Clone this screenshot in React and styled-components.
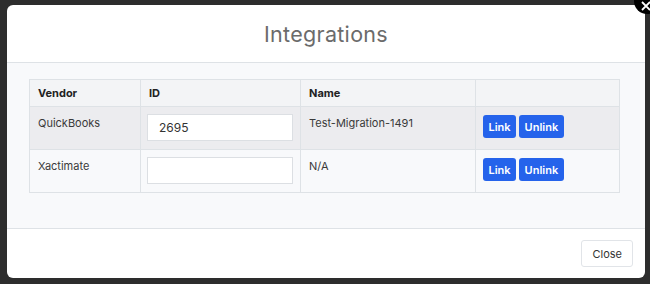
import React from 'react';
import styled, { createGlobalStyle } from 'styled-components';

const GlobalStyle = createGlobalStyle`
  html, body {
    margin: 0;
    padding: 0;
    background: #2d2d2d;
    font-family: Inter, "Noto Sans", sans-serif;
  }
`;

const Backdrop = styled.div`
  width: 650px;
  height: 284px;
  box-sizing: border-box;
  padding: 5px 5px 6px 7px;
  background: #2d2d2d;
  overflow: hidden;
`;

const Modal = styled.div`
  position: relative;
  width: 638px;
  height: 273px;
  background: #fff;
  border-radius: 6px;
  display: flex;
  flex-direction: column;
`;

const CloseX = styled.button`
  position: absolute;
  top: -17px;
  right: -15px;
  width: 26px;
  height: 26px;
  border-radius: 50%;
  border: none;
  background: #000;
  color: #fff;
  padding: 0;
  display: flex;
  align-items: center;
  justify-content: center;
  svg { margin: 10px 2px 0 0; }
`;

const Header = styled.div`
  height: 57px;
  display: flex;
  align-items: center;
  justify-content: center;
  border-bottom: 1px solid #dee2e6;
`;

const Title = styled.h2`
  margin: 0;
  font-size: 21.5px;
  font-weight: 400;
  color: #6b6b6b;
  letter-spacing: 0.3px;
`;

const Body = styled.div`
  flex: 1;
  background: #f8f9fb;
  padding: 16px 0 0 22px;
`;

const Table = styled.table`
  width: 591px;
  table-layout: fixed;
  border-collapse: collapse;
  font-size: 11px;
  color: #333;
`;

const Th = styled.th`
  box-sizing: border-box;
  text-align: left;
  font-weight: 700;
  color: #222;
  height: 27px;
  padding: 0 8px;
  background: #f3f4f6;
  border: 1px solid #dee2e6;
  width: ${(p) => p.w || 'auto'};
`;

const Tr = styled.tr`
  background: ${(p) => (p.shade ? '#ececef' : '#f8f9fb')};
`;

const Td = styled.td`
  vertical-align: top;
  height: 43px;
  box-sizing: border-box;
  padding: ${(p) => (p.pad ? '7px 6px' : '9px 8px')};
  border: 1px solid #dee2e6;
  color: #3a3a3a;
`;

const Input = styled.input`
  display: block;
  width: 146px;
  height: 27px;
  box-sizing: border-box;
  border: 1px solid #dcdfe3;
  background: #fff;
  padding: 0 11px;
  font: inherit;
  font-size: 12px;
  color: #333;
  outline: none;
`;

const Actions = styled.div`
  display: flex;
  gap: 3px;
  padding-top: 1px;
  padding-left: 1px;
`;

const Btn = styled.button`
  height: 23px;
  padding: 0 5.5px;
  border: none;
  border-radius: 3px;
  background: #2563eb;
  color: #fff;
  font: inherit;
  font-size: 11px;
  font-weight: 600;
`;

const Footer = styled.div`
  height: 49px;
  border-top: 1px solid #dee2e6;
  display: flex;
  align-items: center;
  justify-content: flex-end;
  padding: 0 12px;
`;

const CloseBtn = styled.button`
  height: 27px;
  padding: 0 10px;
  background: #fff;
  border: 1px solid #e1e4e8;
  border-radius: 3px;
  font: inherit;
  font-size: 11px;
  color: #333;
`;

const rows = [
  { vendor: 'QuickBooks', id: '2695', name: 'Test-Migration-1491' },
  { vendor: 'Xactimate', id: '', name: 'N/A' },
];

export default function App() {
  return (
    <Backdrop>
      <GlobalStyle />
      <Modal>
        <CloseX aria-label="close">
          <svg width="10" height="10" viewBox="0 0 10 10">
            <path d="M1 1L9 9M9 1L1 9" stroke="#fff" strokeWidth="1.8" />
          </svg>
        </CloseX>
        <Header>
          <Title>Integrations</Title>
        </Header>
        <Body>
          <Table>
            <thead>
              <tr>
                <Th w="111px">Vendor</Th>
                <Th w="160px">ID</Th>
                <Th w="175px">Name</Th>
                <Th />
              </tr>
            </thead>
            <tbody>
              {rows.map((r, i) => (
                <Tr key={r.vendor} shade={i === 0}>
                  <Td>{r.vendor}</Td>
                  <Td pad>
                    <Input defaultValue={r.id} />
                  </Td>
                  <Td>{r.name}</Td>
                  <Td pad>
                    <Actions>
                      <Btn>Link</Btn>
                      <Btn>Unlink</Btn>
                    </Actions>
                  </Td>
                </Tr>
              ))}
            </tbody>
          </Table>
        </Body>
        <Footer>
          <CloseBtn>Close</CloseBtn>
        </Footer>
      </Modal>
    </Backdrop>
  );
}
